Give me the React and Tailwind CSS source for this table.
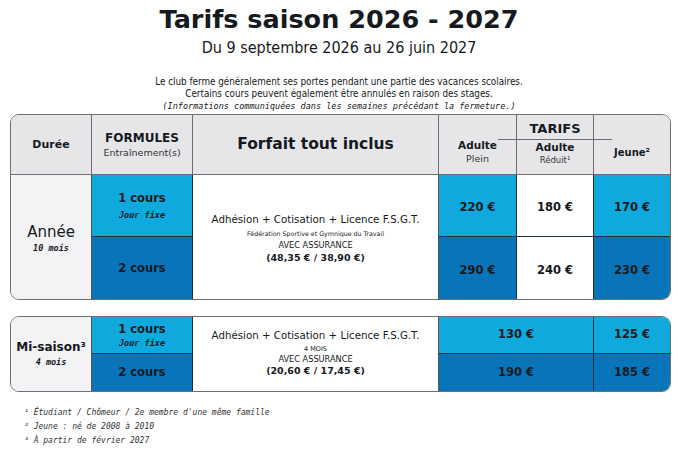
export default function App() {
  const sans = "font-['DejaVu_Sans',sans-serif]";
  const cond = "font-['DejaVu_Sans_Condensed','DejaVu_Sans',sans-serif]";
  const mono = "font-['DejaVu_Sans_Mono',monospace] italic";
  const light = "bg-[#10a9dd]";
  const dark = "bg-[#0874b9]";
  const ink = "text-[#151a20]";
  const price = "flex items-center justify-center text-[11.5px] font-bold";
  return (
    <div className={`w-[678px] h-[452px] bg-white ${sans} ${ink} overflow-hidden`}>
      <div className="flex flex-col items-center pt-[3px]">
        <h1 className="text-[25.5px] font-bold leading-[32px]">Tarifs saison 2026 - 2027</h1>
        <p className={`${cond} text-[16px] leading-[20px] mt-[3px]`}>Du 9 septembre 2026 au 26 juin 2027</p>
        <div className="mt-[18px] flex flex-col items-center text-[9.8px] leading-[12px]">
          <p className={cond}>Le club ferme généralement ses portes pendant une partie des vacances scolaires.</p>
          <p className={cond}>Certains cours peuvent également être annulés en raison des stages.</p>
          <p className={`${mono} text-[8.5px]`}>(Informations communiquées dans les semaines précédant la fermeture.)</p>
        </div>
      </div>

      {/* Table 1 */}
      <div className="ml-[10px] w-[661px] mt-[2px] rounded-[9px] border border-[#6d6f72] overflow-hidden grid grid-cols-[81px_101px_246px_78px_77px_76px] grid-rows-[60px_62px_62px]">
        {/* header */}
        <div className="bg-[#e6e6e9] border-r border-b border-[#6d6f72] flex items-center justify-center pt-[1px] text-[11px] font-bold">Durée</div>
        <div className="bg-[#e6e6e9] border-r border-b border-[#6d6f72] flex flex-col items-center justify-center">
          <span className="text-[12px] font-bold leading-[16px]">FORMULES</span>
          <span className="text-[9.5px] leading-[13px] text-[#333]">Entraînement(s)</span>
        </div>
        <div className="bg-[#e6e6e9] border-r border-b border-[#6d6f72] flex items-center justify-center pt-[1px] text-[15.5px] font-bold">Forfait tout inclus</div>
        <div className="bg-[#e6e6e9] border-r border-b border-[#6d6f72] flex flex-col items-center pt-[24px]">
          <span className="text-[10.5px] font-bold leading-[13px]">Adulte</span>
          <span className="text-[9.5px] leading-[14px] text-[#333]">Plein</span>
        </div>
        <div className="relative bg-[#e6e6e9] border-r border-b border-[#6d6f72] flex flex-col items-center pt-[6px]">
          <span className="text-[13px] font-bold leading-[16px]">TARIFS</span>
          <div className="absolute left-[-19px] right-[-19px] top-[24px] h-px bg-[#6d6f72]"></div>
          <span className="text-[10.5px] font-bold leading-[13px] mt-[4px]">Adulte</span>
          <span className="text-[8.5px] leading-[12px] text-[#333]">Réduit¹</span>
        </div>
        <div className="bg-[#e6e6e9] border-b border-[#6d6f72] flex items-center justify-center pt-[16px] text-[10px] font-bold">Jeune²</div>

        {/* body */}
        <div className="row-span-2 bg-[#f3f3f5] border-r border-[#555] flex flex-col items-center justify-center pt-[3px]">
          <span className="text-[15px] leading-[18px]">Année</span>
          <span className={`${mono} text-[8.5px] font-bold leading-[14px]`}>10 mois</span>
        </div>
        <div className={`${light} border-r border-b border-[#1d3040] flex flex-col items-center justify-center pt-[1px]`}>
          <span className="text-[11.5px] font-bold leading-[16px]">1 cours</span>
          <span className={`${mono} text-[8.5px] font-bold leading-[14px] mt-[2px]`}>Jour fixe</span>
        </div>
        <div className="row-span-2 bg-white border-r border-[#555] flex flex-col items-center justify-center pt-[2px]">
          <span className="text-[10.25px] leading-[15px]">Adhésion + Cotisation + Licence F.S.G.T.</span>
          <span className="text-[6.3px] leading-[11px] mt-[1px]">Fédération Sportive et Gymnique du Travail</span>
          <span className="text-[8.2px] leading-[12px]">AVEC ASSURANCE</span>
          <span className="text-[9.5px] font-bold leading-[14px]">(48,35 € / 38,90 €)</span>
        </div>
        <div className={`${light} border-r border-b border-[#1d3040] pt-[5px] ${price}`}>220 €</div>
        <div className={`bg-white border-r border-b border-[#1d3040] pt-[5px] ${price}`}>180 €</div>
        <div className={`${light} border-b border-[#1d3040] pt-[5px] ${price}`}>170 €</div>

        <div className={`${dark} border-r border-[#1d3040] pt-[1px] ${price}`}>2 cours</div>
        <div className={`${dark} border-r border-[#1d3040] pt-[5px] ${price}`}>290 €</div>
        <div className={`bg-white border-r border-[#1d3040] pt-[5px] ${price}`}>240 €</div>
        <div className={`${dark} pt-[5px] ${price}`}>230 €</div>
      </div>

      {/* Table 2 */}
      <div className="ml-[10px] w-[661px] mt-[16px] rounded-[9px] border border-[#6d6f72] overflow-hidden grid grid-cols-[81px_101px_246px_155px_76px] grid-rows-[37px_37px]">
        <div className="row-span-2 bg-[#f3f3f5] border-r border-[#555] flex flex-col items-center justify-center">
          <span className="text-[12px] font-bold leading-[16px]">Mi-saison³</span>
          <span className={`${mono} text-[8.5px] font-bold leading-[14px]`}>4 mois</span>
        </div>
        <div className={`${light} border-r border-b border-[#1d3040] flex flex-col items-center justify-center`}>
          <span className="text-[11.5px] font-bold leading-[15px]">1 cours</span>
          <span className={`${mono} text-[8.5px] font-bold leading-[12px]`}>Jour fixe</span>
        </div>
        <div className="row-span-2 bg-white border-r border-[#555] flex flex-col items-center justify-center pb-[4px]">
          <span className="text-[10.25px] leading-[15px]">Adhésion + Cotisation + Licence F.S.G.T.</span>
          <span className="text-[6.5px] leading-[10px] mt-[1px]">4 MOIS</span>
          <span className="text-[8.2px] leading-[11px]">AVEC ASSURANCE</span>
          <span className="text-[9.5px] font-bold leading-[12px]">(20,60 € / 17,45 €)</span>
        </div>
        <div className={`${light} border-r border-b border-[#1d3040] ${price}`}>130 €</div>
        <div className={`${light} border-b border-[#1d3040] ${price}`}>125 €</div>
        <div className={`${dark} border-r border-[#1d3040] ${price}`}>2 cours</div>
        <div className={`${dark} border-r border-[#1d3040] ${price}`}>190 €</div>
        <div className={`${dark} ${price}`}>185 €</div>
      </div>

      <div className={`${mono} text-[8px] leading-[14px] text-[#333] ml-[24px] mt-[14px]`}>
        <p>¹ Étudiant / Chômeur / 2e membre d'une même famille</p>
        <p>² Jeune : né de 2008 à 2010</p>
        <p>³ À partir de février 2027</p>
      </div>
    </div>
  );
}
